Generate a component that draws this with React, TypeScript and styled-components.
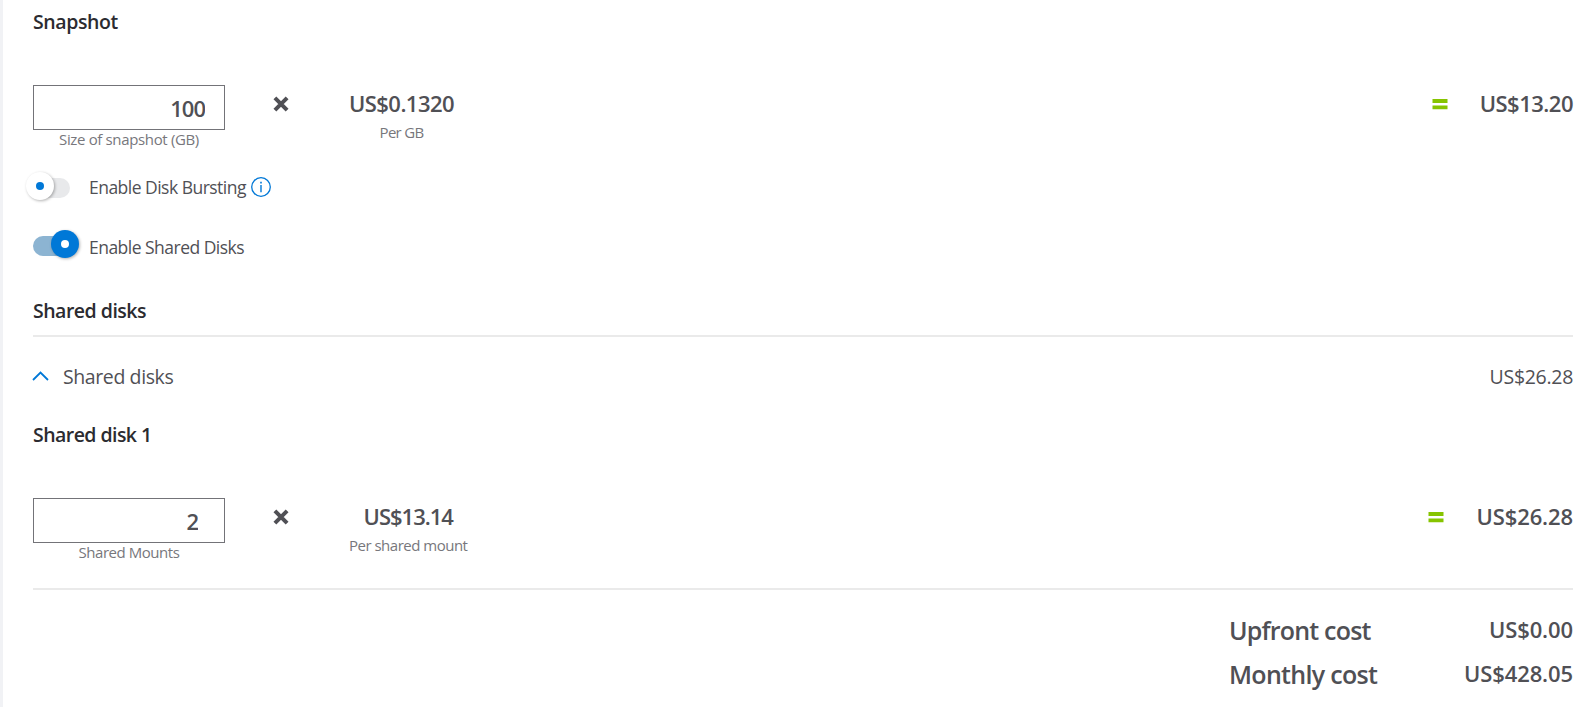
import React from 'react';
import styled, { createGlobalStyle } from 'styled-components';

const GlobalStyle = createGlobalStyle`
  * {
    box-sizing: border-box;
  }

  body {
    margin: 0;
    overflow: hidden;
    background: #ffffff;
    font-family: 'Open Sans', 'Noto Sans', sans-serif;
    color: #505055;
  }
`;

const Panel = styled.main`
  display: flex;
  flex-direction: column;
  height: 707px;
  padding: 8px 14px 0 30px;
  border-left: 3px solid #f1f2f5;
`;

const Heading = styled.h3<{ $top?: number; $spacing: number }>`
  flex: none;
  margin: ${({ $top }) => $top || 0}px 0 0;
  font-size: 19.5px;
  font-weight: 600;
  line-height: 28px;
  letter-spacing: ${({ $spacing }) => $spacing}px;
  color: #2b2b30;
`;

const Divider = styled.hr<{ $top: number }>`
  flex: none;
  width: 100%;
  height: 2px;
  margin: ${({ $top }) => $top}px 0 0;
  border: 0;
  background: #eaeaea;
`;

const CalcRow = styled.div`
  flex: none;
  display: flex;
  align-items: flex-start;
  height: 65px;
  margin-top: 49px;
`;

const Field = styled.label`
  display: flex;
  flex-direction: column;
  align-items: center;
  width: 192px;
`;

const NumberInput = styled.input<{ $right: number }>`
  width: 192px;
  height: 45px;
  padding: 1px ${({ $right }) => $right}px 0 0;
  border: 1px solid #737378;
  border-radius: 0;
  outline: none;
  background: #ffffff;
  color: #505055;
  font-family: inherit;
  font-size: 22px;
  font-weight: 600;
  letter-spacing: -1px;
  text-align: right;
`;

const Caption = styled.span<{ $top: number; $spacing: number }>`
  margin-top: ${({ $top }) => $top}px;
  font-size: 15px;
  line-height: 20px;
  letter-spacing: ${({ $spacing }) => $spacing}px;
  white-space: nowrap;
  color: #77777c;
`;

const TimesIcon = styled.svg`
  width: 16px;
  height: 16px;
  margin: 11px 60px 0 48px;
`;

const UnitPrice = styled.div`
  display: flex;
  flex-direction: column;
  align-items: center;
  padding-top: 3px;
`;

const Amount = styled.span<{ $spacing?: number }>`
  font-size: 22px;
  font-weight: 600;
  line-height: 30px;
  letter-spacing: ${({ $spacing }) => $spacing ?? -0.1}px;
  white-space: nowrap;
`;

const Result = styled.div`
  display: flex;
  margin-left: auto;
  padding-top: 3px;
`;

const EqualsIcon = styled.svg`
  width: 16px;
  height: 11px;
  margin: 11px 32px 0 0;
`;

const ToggleRow = styled.div<{ $top: number }>`
  flex: none;
  display: flex;
  align-items: flex-start;
  height: 28px;
  margin-top: ${({ $top }) => $top}px;
`;

const Track = styled.button<{ $on?: boolean }>`
  display: flex;
  align-items: center;
  width: 37px;
  height: 20px;
  margin: 6px 19px 0 0;
  padding: 0;
  border: 0;
  border-radius: 10px;
  background: ${({ $on }) => ($on ? '#8cb4d2' : '#e8e9eb')};
`;

const Knob = styled.span<{ $on?: boolean }>`
  flex: none;
  display: flex;
  align-items: center;
  justify-content: center;
  width: 28px;
  height: 28px;
  margin: -4px 0 0 ${({ $on }) => ($on ? 18 : -7)}px;
  border-radius: 50%;
  background: ${({ $on }) => ($on ? '#0078d7' : '#ffffff')};
  box-shadow: 1px 1px 3px rgba(0, 0, 0, 0.3);

  &::after {
    content: '';
    width: 8px;
    height: 8px;
    border-radius: 50%;
    background: ${({ $on }) => ($on ? '#ffffff' : '#0078d7')};
  }
`;

const ToggleLabel = styled.span<{ $top: number }>`
  margin-top: ${({ $top }) => $top}px;
  font-size: 17.5px;
  line-height: 28px;
  letter-spacing: -0.52px;
  white-space: nowrap;
`;

const InfoIcon = styled.svg`
  width: 20px;
  height: 20px;
  margin: 5px 0 0 5px;
`;

const Accordion = styled.div`
  flex: none;
  display: flex;
  align-items: flex-start;
  height: 28px;
  margin-top: 26px;
  font-size: 19.5px;
  line-height: 28px;
`;

const Chevron = styled.svg`
  width: 17px;
  height: 10px;
  margin: 8px 14px 0 -1px;
`;

const AccordionTitle = styled.span`
  letter-spacing: -0.4px;
`;

const AccordionPrice = styled.span`
  margin-left: auto;
  letter-spacing: -0.3px;
`;

const Totals = styled.div`
  flex: none;
  display: grid;
  grid-template-columns: 1fr auto;
  grid-auto-rows: 44px;
  width: 344px;
  margin: 24px 0 0 auto;
`;

const TotalLabel = styled.span<{ $spacing: number }>`
  font-size: 25px;
  font-weight: 600;
  line-height: 32px;
  letter-spacing: ${({ $spacing }) => $spacing}px;
  white-space: nowrap;
`;

const TotalAmount = styled(Amount)`
  text-align: right;
`;

const Times = () => (
  <TimesIcon viewBox="0 0 16 16">
    <path d="M1.9 1.9 L14.1 14.1 M14.1 1.9 L1.9 14.1" stroke="#505055" strokeWidth="4" />
  </TimesIcon>
);

const Equals = () => (
  <EqualsIcon viewBox="0 0 16 11">
    <path d="M0.5 0H15.5V4H0.5ZM0.5 6.5H15.5V10.3H0.5Z" fill="#86c400" />
  </EqualsIcon>
);

const App: React.FC = () => {
  return (
    <>
      <GlobalStyle />
      <Panel>
        <Heading $spacing={-0.4}>Snapshot</Heading>
        <CalcRow>
          <Field>
            <NumberInput defaultValue="100" $right={19} />
            <Caption $top={-1} $spacing={-0.35}>
              Size of snapshot (GB)
            </Caption>
          </Field>
          <Times />
          <UnitPrice>
            <Amount $spacing={-0.55}>US$0.1320</Amount>
            <Caption $top={4} $spacing={-0.7}>
              Per GB
            </Caption>
          </UnitPrice>
          <Result>
            <Equals />
            <Amount $spacing={-0.5}>US$13.20</Amount>
          </Result>
        </CalcRow>

        <ToggleRow $top={22}>
          <Track>
            <Knob />
          </Track>
          <ToggleLabel $top={1}>Enable Disk Bursting</ToggleLabel>
          <InfoIcon viewBox="0 0 20 20">
            <circle cx="10" cy="10" r="9.3" fill="none" stroke="#0078d7" strokeWidth="1.3" />
            <path d="M9.3 8H10.7V15.3H9.3ZM9.2 4.8H10.8V6.4H9.2Z" fill="#0078d7" />
          </InfoIcon>
        </ToggleRow>
        <ToggleRow $top={30}>
          <Track $on>
            <Knob $on />
          </Track>
          <ToggleLabel $top={3}>Enable Shared Disks</ToggleLabel>
        </ToggleRow>

        <Heading $top={39} $spacing={-0.5}>
          Shared disks
        </Heading>
        <Divider $top={10} />
        <Accordion>
          <Chevron viewBox="0 0 17 10">
            <path d="M1 9 L8.5 1.6 L16 9" fill="none" stroke="#0078d7" strokeWidth="1.8" />
          </Chevron>
          <AccordionTitle>Shared disks</AccordionTitle>
          <AccordionPrice>US$26.28</AccordionPrice>
        </Accordion>

        <Heading $top={30} $spacing={-0.55}>
          Shared disk 1
        </Heading>
        <CalcRow>
          <Field>
            <NumberInput defaultValue="2" $right={26} />
            <Caption $top={-1} $spacing={-0.45}>
              Shared Mounts
            </Caption>
          </Field>
          <Times />
          <UnitPrice>
            <Amount $spacing={-1}>US$13.14</Amount>
            <Caption $top={4} $spacing={-0.5}>
              Per shared mount
            </Caption>
          </UnitPrice>
          <Result>
            <Equals />
            <Amount>US$26.28</Amount>
          </Result>
        </CalcRow>
        <Divider $top={25} />

        <Totals>
          <TotalLabel $spacing={-0.8}>Upfront cost</TotalLabel>
          <TotalAmount>US$0.00</TotalAmount>
          <TotalLabel $spacing={-0.7}>Monthly cost</TotalLabel>
          <TotalAmount>US$428.05</TotalAmount>
        </Totals>
      </Panel>
    </>
  );
};

export default App;
